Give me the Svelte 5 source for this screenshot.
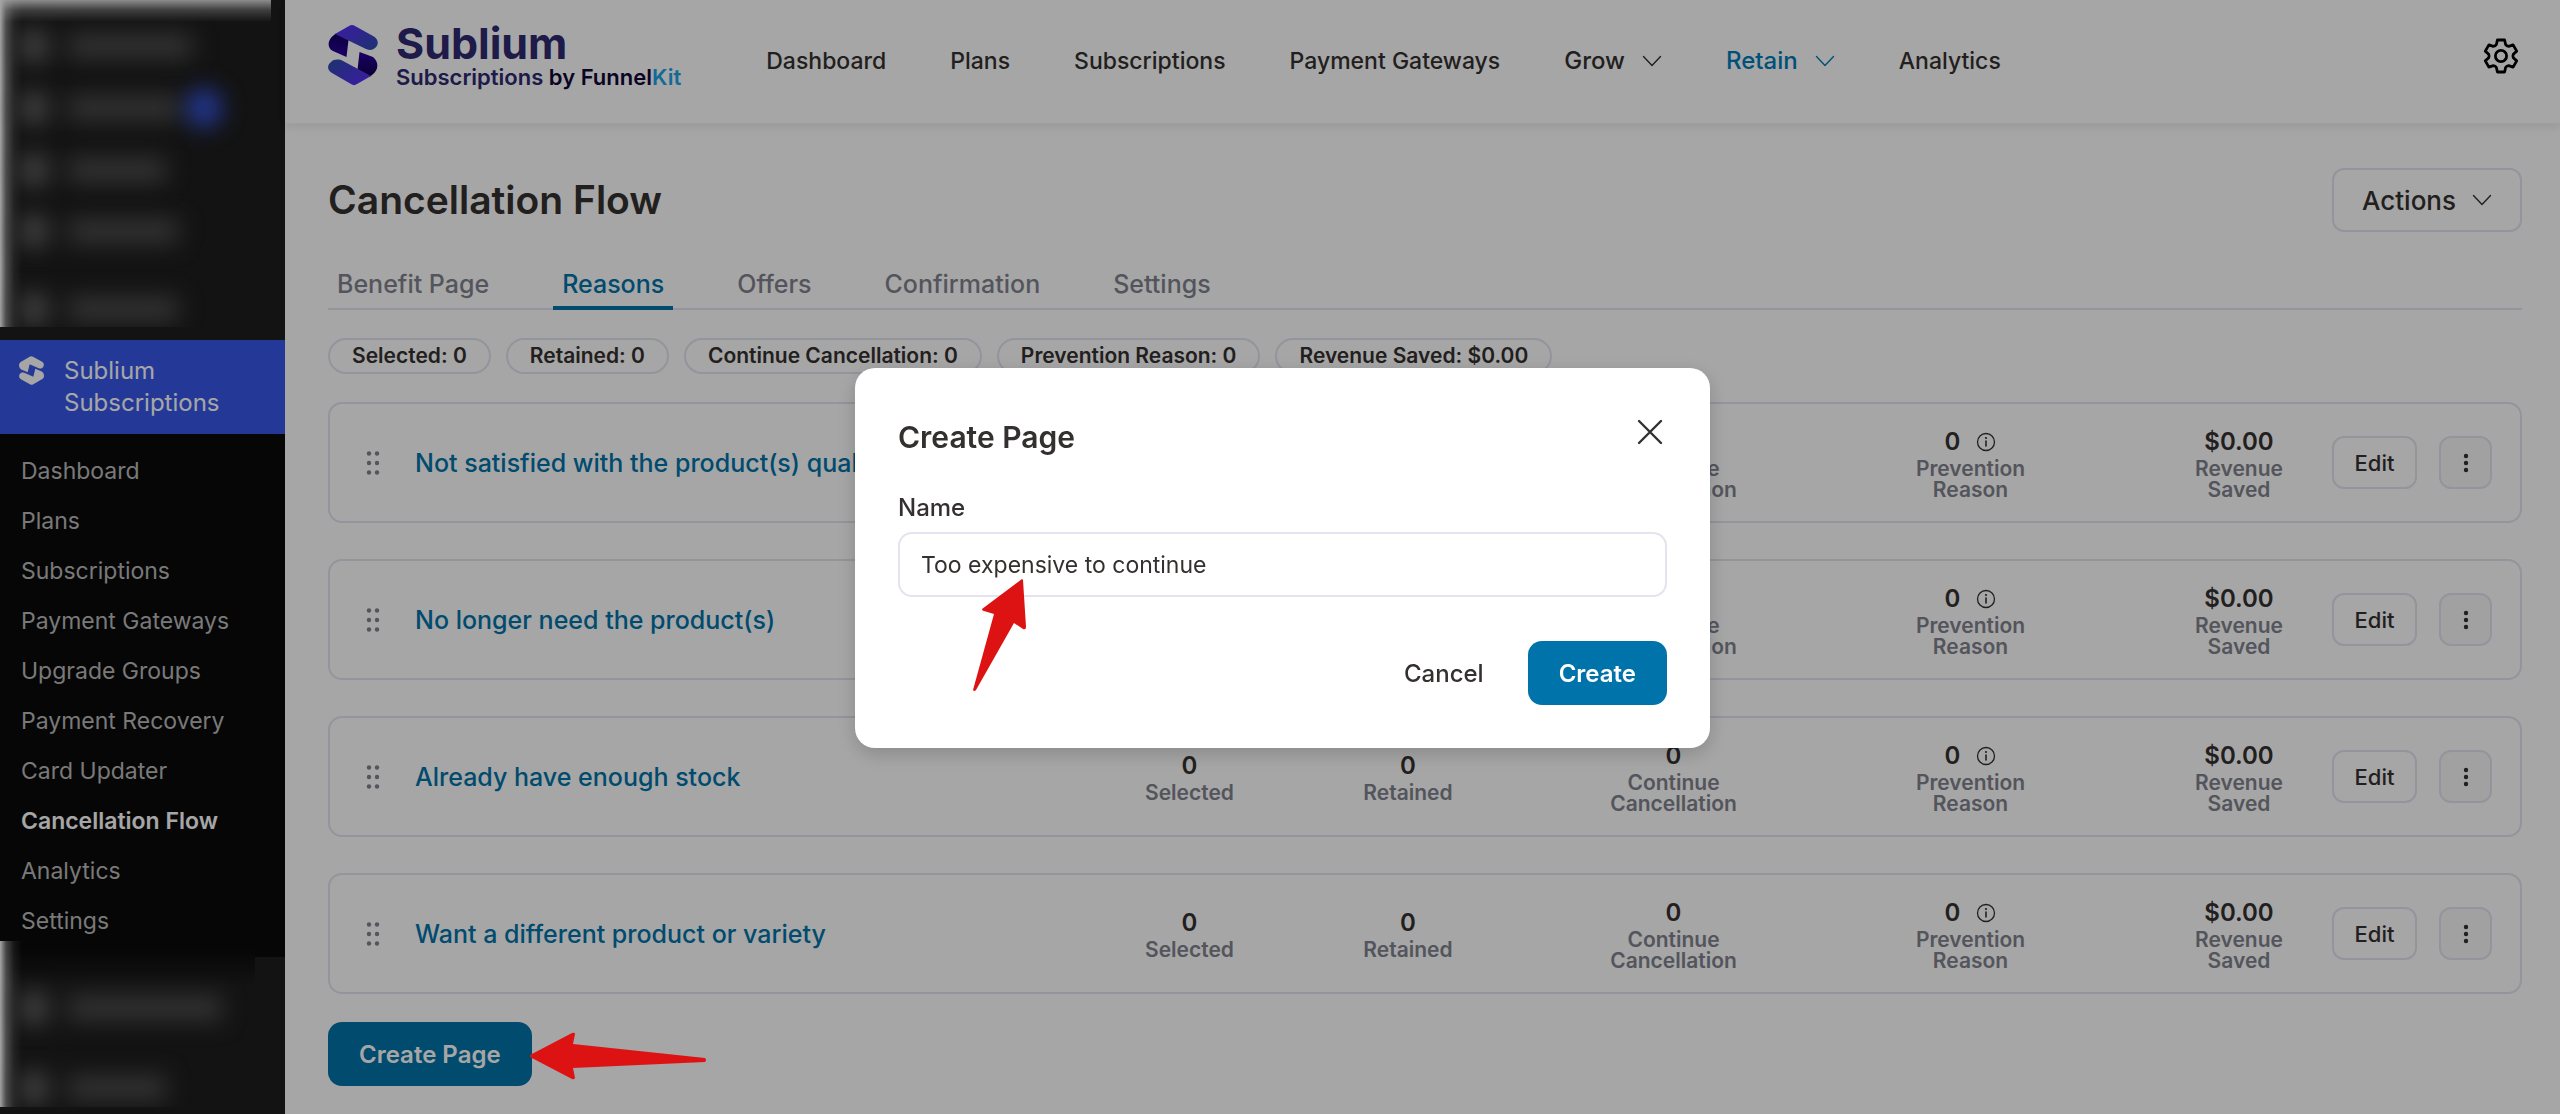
<script>
  let pageName = $state('Too expensive to continue');

  const topNav = [
    { label: 'Dashboard' },
    { label: 'Plans' },
    { label: 'Subscriptions' },
    { label: 'Payment Gateways' },
    { label: 'Grow', menu: true },
    { label: 'Retain', menu: true, active: true },
    { label: 'Analytics' }
  ];

  const sideNav = [
    'Dashboard',
    'Plans',
    'Subscriptions',
    'Payment Gateways',
    'Upgrade Groups',
    'Payment Recovery',
    'Card Updater',
    'Cancellation Flow',
    'Analytics',
    'Settings'
  ];

  const tabs = ['Benefit Page', 'Reasons', 'Offers', 'Confirmation', 'Settings'];

  const totals = [
    'Selected: 0',
    'Retained: 0',
    'Continue Cancellation: 0',
    'Prevention Reason: 0',
    'Revenue Saved: $0.00'
  ];

  const reasons = [
    'Not satisfied with the product(s) quality',
    'No longer need the product(s)',
    'Already have enough stock',
    'Want a different product or variety'
  ];

  const stats = [
    { value: '0', lines: ['Selected'] },
    { value: '0', lines: ['Retained'] },
    { value: '0', lines: ['Continue', 'Cancellation'] },
    { value: '0', lines: ['Prevention', 'Reason'], info: true },
    { value: '$0.00', lines: ['Revenue', 'Saved'] }
  ];
</script>

{#snippet chevron()}
  <svg class="chevron" viewBox="0 0 20 20" aria-hidden="true">
    <path d="M1.5 5.5 10 14.5l8.5-9" fill="none" stroke="currentColor" stroke-width="1.4" stroke-linecap="round" stroke-linejoin="round" />
  </svg>
{/snippet}

{#snippet markHalf()}
  <path d="M0 26C0 21 5 17 9 15L32 2q5-3 10 0l26 14c8 5 8 12 4 17s-12 4-16 2L32 24l-6 24L7 40C1 37 0 31 0 26Z" />
{/snippet}

<div class="shell">
  <aside class="sidebar">
    <div class="hidden-menu top" aria-hidden="true">
      <span class="ghost"><i></i><b class="w80"></b></span>
      <span class="ghost"><i></i><b class="w70"></b><em></em></span>
      <span class="ghost"><i></i><b class="w60"></b></span>
      <span class="ghost"><i></i><b class="w70"></b></span>
      <span class="ghost spaced"><i></i><b class="w70"></b></span>
    </div>

    <a class="current" href="#sublium">
      <svg viewBox="0 0 75 86" fill="currentColor" aria-hidden="true">
        {@render markHalf()}
        <g transform="rotate(180 37.5 43)">{@render markHalf()}</g>
      </svg>
      <span>Sublium Subscriptions</span>
    </a>

    <nav class="submenu" aria-label="Sublium">
      {#each sideNav as item}
        <a href="#{item}" class:active={item === 'Cancellation Flow'}>{item}</a>
      {/each}
    </nav>

    <div class="hidden-menu bottom" aria-hidden="true">
      <span class="ghost"><i></i><b class="w90"></b></span>
      <span class="ghost"><i></i><b class="w60"></b></span>
    </div>
  </aside>

  <div class="page">
    <header class="topbar">
      <a class="logo" href="#home">
        <svg viewBox="0 0 50 62" aria-hidden="true">
          <defs>
            <linearGradient id="lg-top" x1="0" y1="0" x2="1" y2="1">
              <stop offset="0.2" stop-color="#5530f0" />
              <stop offset="1" stop-color="#2b4fa8" />
            </linearGradient>
            <linearGradient id="lg-bottom" x1="0" y1="0" x2="1" y2="1">
              <stop offset="0" stop-color="#2b4fa8" />
              <stop offset="0.8" stop-color="#5530f0" />
            </linearGradient>
            <linearGradient id="lg-dark" x1="0" y1="0" x2="0" y2="1">
              <stop offset="0" stop-color="#12005c" />
              <stop offset="1" stop-color="#2a00a0" />
            </linearGradient>
            <linearGradient id="lg-dark2" x1="0" y1="0" x2="0" y2="1">
              <stop offset="0" stop-color="#2a00a0" />
              <stop offset="1" stop-color="#10004c" />
            </linearGradient>
          </defs>
          <path d="M6 11C-1 16-1 24 5 27L18.500 33 20.500 16 8 9.500Z" fill="url(#lg-dark)" />
          <path d="M44 51c7-5 7-13 1-18L31.500 28 29.500 46 42 52.500Z" fill="url(#lg-dark2)" />
          <path d="M7 10 21 2c2-1.500 4-1.500 6 0l18 10c7 4 5 10 2 12-3 3-8 2-11 0L7 10Z" fill="url(#lg-top)" />
          <path d="M43 52 29 60c-2 1.500-4 1.500-6 0L4 49c-5-3-5-8-1-11 3-3 8-3 12-1l28 15Z" fill="url(#lg-bottom)" />
        </svg>
        <span class="brand">
          <strong>Sublium</strong>
          <small>Subscriptions <span class="by">by Funnel</span><span class="kit">Kit</span></small>
        </span>
      </a>

      <nav class="topnav" aria-label="Main">
        {#each topNav as item}
          <a href="#{item.label}" class:menu={item.menu} class:active={item.active}>
            {item.label}
            {#if item.menu}{@render chevron()}{/if}
          </a>
        {/each}
      </nav>

      <button class="gear" type="button" aria-label="Settings">
        <svg viewBox="0 0 36 36" aria-hidden="true">
          <path d="M14.400 2h7.200l1 4.500q1 1.600 3.100 1.800l4.400-1.400 3.600 6.200-3.400 3.100q-.8 1.800 0 3.600l3.400 3.100-3.600 6.200-4.400-1.400q-2.100.2-3.100 1.800l-1 4.500h-7.200l-1-4.500q-1-1.600-3.100-1.800l-4.400 1.400-3.600-6.200 3.400-3.100q.8-1.800 0-3.600l-3.400-3.100 3.600-6.200 4.400 1.400q2.100-.2 3.100-1.800Z" fill="none" stroke="currentColor" stroke-width="2.800" stroke-linejoin="round" />
          <circle cx="18" cy="18" r="5.600" fill="none" stroke="currentColor" stroke-width="2.800" />
        </svg>
      </button>
    </header>

    <main>
      <div class="heading">
        <h1>Cancellation Flow</h1>
        <button class="actions-btn" type="button">Actions {@render chevron()}</button>
      </div>

      <div class="tabs" role="tablist">
        {#each tabs as tab}
          <button type="button" role="tab" aria-selected={tab === 'Reasons'} class:active={tab === 'Reasons'}>{tab}</button>
        {/each}
      </div>

      <div class="totals">
        {#each totals as total}
          <span>{total}</span>
        {/each}
      </div>

      <div class="reasons">
        {#each reasons as reason}
          <article class="reason">
            <svg class="drag" viewBox="0 0 14 24" aria-hidden="true">
              {#each [2.5, 12, 21.5] as cy}
                <circle cx="3" {cy} r="2.2" />
                <circle cx="11" {cy} r="2.2" />
              {/each}
            </svg>
            <a class="name" href="#reason">{reason}</a>
            {#each stats as stat}
              <div class="stat">
                <span class="value">
                  {stat.value}
                  {#if stat.info}
                    <svg viewBox="0 0 20 20" aria-hidden="true">
                      <circle cx="10" cy="10" r="8.500" fill="none" stroke="currentColor" stroke-width="1.300" />
                      <path d="M10 9v5" stroke="currentColor" stroke-width="1.600" stroke-linecap="round" />
                      <circle cx="10" cy="6" r="1.100" fill="currentColor" />
                    </svg>
                  {/if}
                </span>
                {#each stat.lines as line}
                  <span class="label">{line}</span>
                {/each}
              </div>
            {/each}
            <div class="row-actions">
              <button class="edit" type="button">Edit</button>
              <button class="more" type="button" aria-label="More">
                <svg viewBox="0 0 6 20" aria-hidden="true">
                  <circle cx="3" cy="3" r="2.2" />
                  <circle cx="3" cy="10" r="2.2" />
                  <circle cx="3" cy="17" r="2.2" />
                </svg>
              </button>
            </div>
          </article>
        {/each}
      </div>

      <button class="primary create-page" type="button">Create Page</button>
    </main>
  </div>
</div>

<div class="overlay">
  <div class="modal" role="dialog" aria-modal="true" aria-labelledby="modal-title">
    <div class="modal-head">
      <h2 id="modal-title">Create Page</h2>
      <button class="close" type="button" aria-label="Close">
        <svg viewBox="0 0 26 26" aria-hidden="true">
          <path d="M2 2l22 22M24 2 2 24" fill="none" stroke="currentColor" stroke-width="2.400" stroke-linecap="round" />
        </svg>
      </button>
    </div>
    <label for="page-name">Name</label>
    <input id="page-name" type="text" bind:value={pageName} />
    <div class="modal-foot">
      <button class="cancel" type="button">Cancel</button>
      <button class="primary" type="button">Create</button>
    </div>
    <svg class="arrow up" viewBox="0 0 54 114" aria-hidden="true">
      <path d="M50 1 10 31q0 2 2 2l10 3L1 112q1 2 3 0L42 45l9 6q3 1 3-2L51 2Z" />
    </svg>
  </div>
</div>

<svg class="arrow left" viewBox="0 0 178 48" aria-hidden="true">
  <path d="M1 23 43 1q3-1 3 1l-2 10 132 14q2 2 0 4L44 36l2 10q-1 2-3 1L1 25Z" />
</svg>

<style>
  :global(body) {
    background: #fff;
    color: #353030;
    font-family: Inter, "Liberation Sans", sans-serif;
  }

  a { color: inherit; text-decoration: none; }

  button, input { font: inherit; color: inherit; }

  button {
    background: none;
    border: none;
    padding: 0;
    cursor: pointer;
  }

  .shell {
    display: flex;
    min-height: 100vh;
  }

  /* Sidebar */
  .sidebar {
    width: 285px;
    flex-shrink: 0;
    background: #1e1e1e;
    display: flex;
    flex-direction: column;
  }

  .hidden-menu {
    display: flex;
    flex-direction: column;
    overflow: hidden;
  }

  .hidden-menu.top {
    height: 327px;
    width: 271px;
    margin-bottom: 13px;
    gap: 26px;
    padding-top: 28px;
    box-sizing: border-box;
    background:
      linear-gradient(90deg, #fff 0, rgba(255, 255, 255, 0.4) 6px, rgba(255, 255, 255, 0.1) 14px, transparent 22px),
      linear-gradient(#d8d8d8, rgba(255, 255, 255, 0.3) 10px, transparent 22px);
  }

  .hidden-menu.bottom {
    height: 166px;
    width: 255px;
    gap: 44px;
    padding-top: 49px;
    box-sizing: border-box;
    margin-top: -16px;
    background:
      linear-gradient(90deg, #fff 0, rgba(255, 255, 255, 0.4) 6px, rgba(255, 255, 255, 0.1) 14px, transparent 22px),
      linear-gradient(#0a0a0a 8px, #1e1e1e 44px);
  }

  .ghost {
    display: flex;
    align-items: center;
    gap: 20px;
    height: 36px;
    padding-left: 20px;
    filter: blur(11px);
  }

  .ghost.spaced { margin-top: 16px; }
  .ghost i { width: 28px; height: 32px; background: #606060; }
  .ghost b { height: 26px; background: #4c4c4c; }
  .ghost em { width: 36px; height: 40px; margin-left: -12px; border-radius: 20px; background: #3451d4; }
  .ghost .w60 { width: 98px; }
  .ghost .w70 { width: 110px; }
  .ghost .w80 { width: 124px; }
  .ghost .w90 { width: 154px; }

  .current {
    display: flex;
    gap: 20px;
    padding: 15px 19px;
    background: #3858e9;
    color: #fff;
    font-size: 24px;
    line-height: 32px;
  }

  .current svg {
    width: 25px;
    height: 29px;
    margin-top: 1px;
    flex-shrink: 0;
  }

  .submenu {
    display: flex;
    flex-direction: column;
    padding: 12px 21px 11px;
    background: #0a0a0a;
    color: #bbb;
    font-size: 23px;
    line-height: 50px;
  }

  .submenu .active { color: #fff; font-weight: 600; }

  /* Top bar */
  .page { flex: 1; min-width: 0; }

  .topbar {
    display: flex;
    align-items: center;
    height: 124px;
    padding: 0 41px 0 42px;
    border-bottom: 1px solid #f4f4f4;
    box-shadow: 0 4px 8px rgba(0, 0, 0, 0.07);
    box-sizing: border-box;
  }

  .logo {
    display: flex;
    align-items: center;
    gap: 17px;
    margin-bottom: 13px;
  }

  .logo svg { width: 52px; height: 62px; }
  .brand { display: flex; flex-direction: column; color: #2e2870; }
  .brand strong { font-size: 43px; line-height: 44px; font-weight: 700; }
  .brand small { font-size: 22px; line-height: 24px; font-weight: 600; }
  .by { color: #100838; }
  .kit { color: #1ba3e8; }

  .topnav {
    display: flex;
    align-items: center;
    gap: 64px;
    margin: 0 0 2px 85px;
    font-size: 23px;
    font-weight: 500;
  }

  .topnav a { display: flex; align-items: center; gap: 17px; }
  .topnav .menu { font-size: 24px; }
  .topnav .active { color: #007cba; }
  .chevron { width: 20px; height: 20px; }
  .gear { margin-left: auto; margin-bottom: 12px; color: #000; }
  .gear svg { display: block; width: 36px; height: 36px; }

  /* Content */
  main { padding: 44px 38px 0 43px; }

  .heading {
    display: flex;
    align-items: center;
    justify-content: space-between;
  }

  h1 { margin: 0; font-size: 39px; line-height: 64px; font-weight: 600; }

  .actions-btn {
    display: flex;
    align-items: center;
    gap: 16px;
    height: 64px;
    padding: 0 28px;
    border: 2px solid #e4e3f0;
    border-radius: 12px;
    font-size: 26px;
    font-weight: 500;
  }

  .tabs {
    display: flex;
    gap: 55px;
    margin-top: 28px;
    border-bottom: 2px solid #e4e3f0;
    color: #82838e;
    font-size: 25px;
    font-weight: 500;
  }

  .tabs button {
    height: 50px;
    padding: 2px 9px 0;
    margin-bottom: -2px;
    border-bottom: 4px solid transparent;
  }

  .tabs .active { color: #0073aa; border-color: #0073aa; }

  .totals {
    display: flex;
    gap: 15px;
    margin-top: 28px;
    font-size: 21px;
    font-weight: 600;
  }

  .totals span {
    padding: 0 22px;
    line-height: 32px;
    border: 2px solid #e4e3f0;
    border-radius: 18px;
  }

  .reasons {
    display: flex;
    flex-direction: column;
    gap: 36px;
    margin-top: 28px;
  }

  .reason {
    display: grid;
    grid-template-columns: 49px 700fr 149fr 288fr 243fr 351fr 186fr auto;
    align-items: center;
    height: 121px;
    padding: 0 28px 0 36px;
    border: 2px solid #e4e3f0;
    border-radius: 14px;
    box-sizing: border-box;
  }

  .drag { width: 14px; height: 24px; fill: #82838e; }
  .name { color: #0073aa; font-size: 25px; font-weight: 500; white-space: nowrap; }

  .stat {
    display: flex;
    flex-direction: column;
    align-items: center;
    font-weight: 600;
  }

  .value { display: flex; align-items: center; gap: 16px; font-size: 24px; line-height: 32px; }
  .value svg { width: 20px; height: 20px; }
  .label { color: #82838e; font-size: 21px; line-height: 21px; }

  .row-actions { display: flex; gap: 22px; }

  .row-actions button {
    height: 53px;
    border: 2px solid #e4e3f0;
    border-radius: 12px;
    font-size: 22px;
    font-weight: 500;
  }

  .edit { width: 85px; }
  .row-actions .more { width: 53px; background: #f7f7f9; }
  .more svg { display: block; width: 6px; height: 20px; margin: 0 auto; fill: currentColor; }

  .primary {
    height: 64px;
    padding: 0 31px;
    border-radius: 14px;
    background: #0073aa;
    color: #fff;
    font-size: 24px;
    font-weight: 600;
  }

  .create-page { margin-top: 28px; }

  /* Modal */
  .overlay {
    position: fixed;
    inset: 0;
    display: flex;
    align-items: center;
    justify-content: center;
    padding: 2px 0 0 5px;
    background: rgba(0, 0, 0, 0.35);
  }

  .modal {
    position: relative;
    width: 855px;
    padding: 43px;
    border-radius: 20px;
    background: #fff;
    box-sizing: border-box;
    box-shadow: 0 6px 20px rgba(0, 0, 0, 0.18);
  }

  .modal-head { display: flex; justify-content: space-between; }
  h2 { margin: 0; font-size: 30px; line-height: 52px; font-weight: 600; }
  .close { height: 26px; margin: 8px 4px 0 0; }
  .close svg { display: block; width: 26px; height: 26px; }

  label { display: block; margin-top: 31px; font-size: 24px; line-height: 28px; font-weight: 500; }

  input {
    width: 100%;
    height: 65px;
    margin-top: 10px;
    padding: 0 21px;
    border: 2px solid #e4e3f0;
    border-radius: 14px;
    box-sizing: border-box;
    font-size: 23px;
  }

  .modal-foot {
    display: flex;
    justify-content: flex-end;
    gap: 44px;
    margin-top: 44px;
  }

  .cancel { font-size: 24px; font-weight: 500; }

  .arrow { position: absolute; fill: #dd1313; }
  .arrow.up { left: 117px; top: 210px; width: 54px; height: 114px; }
  .arrow.left { left: 529px; top: 1032px; width: 178px; height: 48px; }
</style>
